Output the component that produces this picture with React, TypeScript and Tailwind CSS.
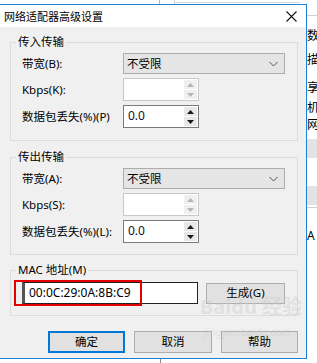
const FONT = "[font-family:'Noto_Sans','Noto_Sans_CJK_SC',sans-serif]";

function Chevron() {
  return (
    <svg width="9" height="6" viewBox="0 0 9 6" className="mr-[6px]">
      <path d="M0.5 1 L4.5 5 L8.5 1" fill="none" stroke="#555" strokeWidth="1" />
    </svg>
  );
}

function Combo({ value }: { value: string }) {
  return (
    <div className="flex h-[21px] w-[162px] items-center justify-between border border-[#adadad] bg-[#e5e5e5]">
      <span className="pl-[3px] text-[11.5px] leading-none text-black">{value}</span>
      <Chevron />
    </div>
  );
}

function Tri({ up, color }: { up?: boolean; color: string }) {
  return (
    <svg width="7" height="4" viewBox="0 0 7 4">
      <path d={up ? "M0 4 L3.5 0 L7 4 Z" : "M0 0 L3.5 4 L7 0 Z"} fill={color} />
    </svg>
  );
}

function Spin({ value, disabled }: { value?: string; disabled?: boolean }) {
  const arrow = disabled ? "#b5b5b5" : "#1a1a1a";
  return (
    <div
      className={`flex h-[23px] w-[76px] border bg-white ${
        disabled ? "border-[#c8c8c8]" : "border-[#7a7a7a]"
      }`}
    >
      <span className="flex-1 pl-[4px] pt-[2px] text-[12px] leading-[16px] text-[#101030]">{value}</span>
      <div className="flex w-[15px] flex-col gap-[1px] p-[1px]">
        <div className={`flex flex-1 items-center justify-center ${disabled ? "bg-[#f0f0f0]" : "bg-[#e8e8e8]"}`}>
          <Tri up color={arrow} />
        </div>
        <div className={`flex flex-1 items-center justify-center ${disabled ? "bg-[#f0f0f0]" : "bg-[#e8e8e8]"}`}>
          <Tri color={arrow} />
        </div>
      </div>
    </div>
  );
}

function Row({ label, children }: { label: string; children: React.ReactNode }) {
  return (
    <div className="flex items-center">
      <span className="w-[101px] whitespace-nowrap text-[11.5px] leading-none text-black">{label}</span>
      {children}
    </div>
  );
}

function Group({
  title,
  className,
  children,
}: {
  title: string;
  className: string;
  children: React.ReactNode;
}) {
  return (
    <div className={`relative ml-[10px] w-[288px] border border-[#dcdcdc] ${className}`}>
      <span className="absolute left-[5px] top-[-8px] bg-[#f0f0f0] px-[2px] text-[11.5px] leading-[14px] text-black">
        {title}
      </span>
      {children}
    </div>
  );
}

function Button({ label, primary, className = "" }: { label: string; primary?: boolean; className?: string }) {
  return (
    <div
      className={`flex items-center justify-center bg-[#e1e1e1] text-[11.5px] leading-none text-black ${
        primary ? "border-2 border-[#0078d7]" : "border border-[#adadad]"
      } ${className}`}
    >
      {label}
    </div>
  );
}

function BackWindow() {
  return (
    <div className="absolute left-[300px] top-0 h-[363px] w-[17px] bg-white text-[12px] leading-none text-black">
      <div className="absolute left-[7px] top-[15px] h-px w-[10px] bg-[#d0d0d0]" />
      <span className="absolute left-[7px] top-[30px]">数</span>
      <span className="absolute left-[7px] top-[54px]">描</span>
      <span className="absolute left-[7px] top-[82px]">享</span>
      <span className="absolute left-[7px] top-[102px]">机</span>
      <span className="absolute left-[7px] top-[119px]">网</span>
      <div className="absolute left-[7px] top-[139px] h-[19px] w-[10px] bg-[#e3e3e3]" />
      <div className="absolute left-[7px] top-[186px] h-[19px] w-[10px] bg-[#e3e3e3]" />
      <div className="absolute left-[7px] top-[207px] h-px w-[10px] bg-[#d0d0d0]" />
      <span className="absolute left-[7px] top-[230px]">A</span>
    </div>
  );
}

export default function App() {
  return (
    <div className={`relative h-[363px] w-[317px] overflow-hidden bg-white ${FONT}`}>
      <div className="absolute left-[159px] top-0 h-[5px] w-px bg-[#b8b8b8]" />
      <div className="absolute left-[174px] top-0 h-[5px] w-px bg-[#d6d6d6]" />
      <div className="absolute left-[174px] top-[2px] h-px w-[143px] bg-[#d6d6d6]" />
      <div className="absolute left-[160px] top-[358px] h-[5px] w-px bg-[#8a8a8a]" />
      <BackWindow />

      <div className="absolute left-[-1px] top-[4px] flex h-[355px] w-[308px] flex-col border border-[#1883d7] bg-[#f0f0f0]">
        <div className="flex h-[22px] items-center justify-between bg-white pl-[4px] pr-[9px]">
          <span className="text-[11px] leading-none text-black">网络适配器高级设置</span>
          <svg width="11" height="11" viewBox="0 0 11 11">
            <path d="M0.5 0.5 L10.5 10.5 M10.5 0.5 L0.5 10.5" stroke="#111" strokeWidth="1.1" />
          </svg>
        </div>

        <Group title="传入传输" className="mt-[15px] h-[99px]">
          <div className="flex flex-col gap-[4px] pl-[11px] pt-[10px]">
            <Row label="带宽(B):">
              <Combo value="不受限" />
            </Row>
            <Row label="Kbps(K):">
              <Spin disabled />
            </Row>
            <Row label="数据包丢失(%)(P)">
              <Spin value="0.0" />
            </Row>
          </div>
        </Group>

        <Group title="传出传输" className="mt-[16px] h-[98px]">
          <div className="flex flex-col gap-[4px] pl-[11px] pt-[10px]">
            <Row label="带宽(A):">
              <Combo value="不受限" />
            </Row>
            <Row label="Kbps(S):">
              <Spin disabled />
            </Row>
            <Row label="数据包丢失(%)(L):">
              <Spin value="0.0" />
            </Row>
          </div>
        </Group>

        <Group title="MAC 地址(M)" className="mt-[15px] h-[46px]">
          <div className="flex items-center gap-[8px] pl-[11px] pt-[11px]">
            <div className="flex h-[22px] w-[176px] items-center border border-[#222] border-l-[3px] border-l-[#555] bg-white pl-[4px] text-[12px] leading-none text-black">
              00:0C:29:0A:8B:C9
            </div>
            <Button label="生成(G)" className="h-[21px] w-[79px]" />
          </div>
          <div className="pointer-events-none absolute left-[3px] top-[9px] h-[26px] w-[128px] border-2 border-[#e50000]" />
        </Group>

        <div className="mt-[15px] flex justify-end gap-[9px] pr-[8px]">
          <Button label="确定" primary className="h-[22px] w-[77px]" />
          <Button label="取消" className="h-[22px] w-[78px]" />
          <Button label="帮助" className="h-[22px] w-[77px]" />
        </div>

        <div className="pointer-events-none absolute left-[200px] top-[292px] flex flex-col items-start whitespace-nowrap text-[rgba(200,200,200,0.4)]">
          <span className="text-[20px] font-bold leading-none">Baidu 经验</span>
          <span className="mt-[10px] pl-[4px] text-[10px] leading-none">jingyan.baidu.com</span>
        </div>
      </div>
    </div>
  );
}
